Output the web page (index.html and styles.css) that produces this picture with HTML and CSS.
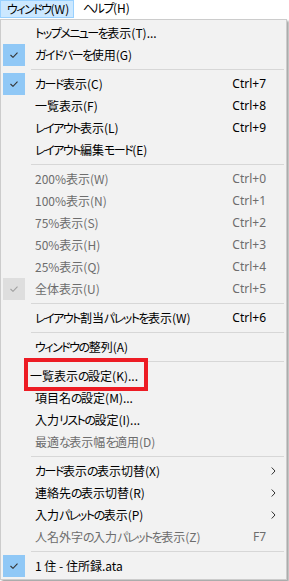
FILE: index.html
```html
<!DOCTYPE html>
<html lang="ja">
<head>
<meta charset="utf-8">
<link rel="stylesheet" href="styles.css">
</head>
<body>
<div class="menubar">
  <div class="mb-item active"><span class="k">ウィンドウ</span>(W)</div>
  <div class="mb-item"><span class="k">ヘルプ</span>(H)</div>
</div>
<div class="menu">
  <div class="item"><span class="chk"></span><span class="lbl"><span class="k">トップメニューを</span>表示(T)...</span><span class="sc"></span><span class="arr"></span></div>
  <div class="item"><span class="chk on"><svg viewBox="0 0 8 6" width="8" height="6"><path d="M0.5 3 L3 5.3 L7.5 0.6" /></svg></span><span class="lbl"><span class="k">ガイドバーを</span>使用(G)</span><span class="sc"></span><span class="arr"></span></div>
  <div class="sep"></div>
  <div class="item"><span class="chk on"><svg viewBox="0 0 8 6" width="8" height="6"><path d="M0.5 3 L3 5.3 L7.5 0.6" /></svg></span><span class="lbl"><span class="k">カード</span>表示(C)</span><span class="sc">Ctrl+7</span><span class="arr"></span></div>
  <div class="item"><span class="chk"></span><span class="lbl">一覧表示(F)</span><span class="sc">Ctrl+8</span><span class="arr"></span></div>
  <div class="item"><span class="chk"></span><span class="lbl"><span class="k">レイアウト</span>表示(L)</span><span class="sc">Ctrl+9</span><span class="arr"></span></div>
  <div class="item"><span class="chk"></span><span class="lbl"><span class="k">レイアウト</span>編集<span class="k">モード</span>(E)</span><span class="sc"></span><span class="arr"></span></div>
  <div class="sep"></div>
  <div class="item dis"><span class="chk"></span><span class="lbl">200%表示(W)</span><span class="sc">Ctrl+0</span><span class="arr"></span></div>
  <div class="item dis"><span class="chk"></span><span class="lbl">100%表示(N)</span><span class="sc">Ctrl+1</span><span class="arr"></span></div>
  <div class="item dis"><span class="chk"></span><span class="lbl">75%表示(S)</span><span class="sc">Ctrl+2</span><span class="arr"></span></div>
  <div class="item dis"><span class="chk"></span><span class="lbl">50%表示(H)</span><span class="sc">Ctrl+3</span><span class="arr"></span></div>
  <div class="item dis"><span class="chk"></span><span class="lbl">25%表示(Q)</span><span class="sc">Ctrl+4</span><span class="arr"></span></div>
  <div class="item dis"><span class="chk on"><svg viewBox="0 0 8 6" width="8" height="6"><path d="M0.5 3 L3 5.3 L7.5 0.6" /></svg></span><span class="lbl">全体表示(U)</span><span class="sc">Ctrl+5</span><span class="arr"></span></div>
  <div class="sep"></div>
  <div class="item"><span class="chk"></span><span class="lbl"><span class="k">レイアウト</span>割当<span class="k">パレットを</span>表示(W)</span><span class="sc">Ctrl+6</span><span class="arr"></span></div>
  <div class="sep"></div>
  <div class="item"><span class="chk"></span><span class="lbl"><span class="k">ウィンドウの</span>整列(A)</span><span class="sc"></span><span class="arr"></span></div>
  <div class="sep"></div>
  <div class="item"><span class="chk"></span><span class="lbl marked">一覧表示<span class="k">の</span>設定(K)...</span><span class="sc"></span><span class="arr"></span></div>
  <div class="item"><span class="chk"></span><span class="lbl">項目名<span class="k">の</span>設定(M)...</span><span class="sc"></span><span class="arr"></span></div>
  <div class="item"><span class="chk"></span><span class="lbl">入力<span class="k">リストの</span>設定(I)...</span><span class="sc"></span><span class="arr"></span></div>
  <div class="item dis"><span class="chk"></span><span class="lbl">最適<span class="k">な</span>表示幅<span class="k">を</span>適用(D)</span><span class="sc"></span><span class="arr"></span></div>
  <div class="sep"></div>
  <div class="item"><span class="chk"></span><span class="lbl"><span class="k">カード</span>表示<span class="k">の</span>表示切替(X)</span><span class="sc"></span><span class="arr"><svg viewBox="0 0 5 8" width="5" height="8"><path d="M0.7 0.5 L4 4 L0.7 7.5" /></svg></span></div>
  <div class="item"><span class="chk"></span><span class="lbl">連絡先<span class="k">の</span>表示切替(R)</span><span class="sc"></span><span class="arr"><svg viewBox="0 0 5 8" width="5" height="8"><path d="M0.7 0.5 L4 4 L0.7 7.5" /></svg></span></div>
  <div class="item"><span class="chk"></span><span class="lbl">入力<span class="k">パレットの</span>表示(P)</span><span class="sc"></span><span class="arr"><svg viewBox="0 0 5 8" width="5" height="8"><path d="M0.7 0.5 L4 4 L0.7 7.5" /></svg></span></div>
  <div class="item dis"><span class="chk"></span><span class="lbl">人名外字<span class="k">の</span>入力<span class="k">パレットを</span>表示(Z)</span><span class="sc">F7</span><span class="arr"></span></div>
  <div class="sep"></div>
  <div class="item"><span class="chk on"><svg viewBox="0 0 8 6" width="8" height="6"><path d="M0.5 3 L3 5.3 L7.5 0.6" /></svg></span><span class="lbl">1 住 - 住所録.ata</span><span class="sc"></span><span class="arr"></span></div>
</div>
<div class="highlight-box"></div>
</body>
</html>
```

FILE: styles.css
```css
html, body {
  margin: 0;
  padding: 0;
  background: #ffffff;
}
body {
  width: 289px;
  height: 581px;
  overflow: hidden;
  position: relative;
  font-family: "Noto Sans CJK JP", sans-serif;
  font-size: 12px;
  font-feature-settings: "palt" 1;
  color: #000;
}
.k {
  letter-spacing: -1.5px;
}
.menubar {
  display: flex;
  height: 19px;
  background: #fff;
}
.mb-item {
  height: 18px;
  line-height: 16px;
  padding: 0 9px;
  box-sizing: border-box;
  white-space: nowrap;
}
.mb-item.active {
  background: #cce8ff;
  border: 1px solid #99d1ff;
  padding: 0 6px;
  width: 74px;
}
.menu {
  width: 287px;
  box-sizing: border-box;
  background: #f2f2f2;
  border: 1px solid #cccccc;
  padding: 2px 0;
  box-shadow: 2px 2px 2px rgba(0,0,0,0.35);
}
.item {
  display: grid;
  grid-template-columns: 34px 1fr auto 20px;
  align-items: center;
  height: 22px;
  white-space: nowrap;
}
.item.dis {
  color: #6d6d6d;
}
.chk {
  margin-left: 2px;
  width: 22px;
  height: 22px;
  display: flex;
  align-items: center;
  justify-content: center;
}
.chk.on {
  background: #90c8f6;
}
.chk svg path {
  fill: none;
  stroke: #333;
  stroke-width: 1.1;
}
.dis .chk.on {
  background: #dedede;
}
.dis .chk svg path {
  stroke: #a0a0a0;
}
.lbl {
  overflow: hidden;
  line-height: 22px;
}
.lbl.marked {
  margin-left: -5px;
}
.sc {
  line-height: 22px;
  font-family: "Noto Sans", sans-serif;
}
.arr {
  display: flex;
  align-items: center;
  padding-left: 5px;
}
.arr svg path {
  fill: none;
  stroke: #333;
  stroke-width: 1;
}
.sep {
  height: 7px;
  box-sizing: border-box;
  padding-top: 3px;
  margin: 0 2px 0 30px;
}
.sep::before {
  content: "";
  display: block;
  height: 1px;
  background: #d7d7d7;
}
.highlight-box {
  position: absolute;
  left: 24px;
  top: 358px;
  width: 124px;
  height: 33px;
  box-sizing: border-box;
  border: 4px solid #ed1c24;
}
```
